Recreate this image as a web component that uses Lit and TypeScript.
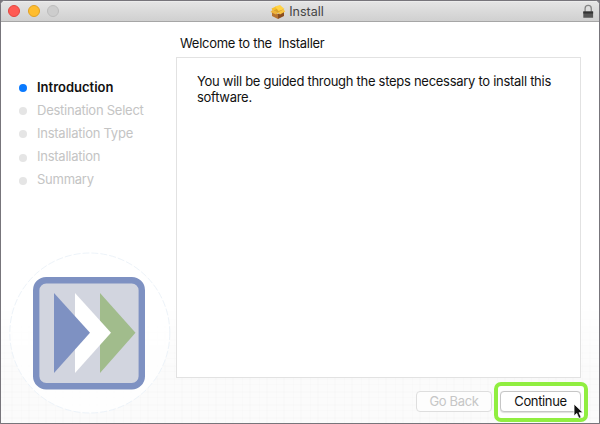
import { LitElement, html, css } from "lit";
import { customElement, state } from "lit/decorators.js";
import { classMap } from "lit/directives/class-map.js";

@customElement("app-root")
export class AppRoot extends LitElement {
  @state() private steps = ["Introduction", "Destination Select", "Installation Type", "Installation", "Summary"];
  @state() private current = 0;

  static styles = css`
    :host { display: block; width: 600px; height: 424px; background: #77757b; font: 13px/16px Inter, "Liberation Sans", sans-serif; letter-spacing: -.285px; color: #111; }
    * { box-sizing: border-box; }
    .window { height: 424px; border: 1px solid #77757b; border-radius: 5px 5px 0 0; overflow: hidden; display: flex; flex-direction: column; background: #fff; position: relative; }
    .bar { height: 21px; flex: none; display: grid; grid-template-columns: 1fr auto 1fr; align-items: center; background: linear-gradient(#f4f4f4 0, #e4e4e4 1px, #d0d0d0 20px); border-bottom: 1px solid #a6a6a6; }
    .lights { display: flex; gap: 7.5px; padding-left: 7px; }
    .light { width: 12px; height: 12px; border-radius: 50%; border: 1px solid #e2463f; background: #ff5b54; }
    .light.min { border-color: #e0a023; background: #ffbd2e; }
    .light.off { border-color: #bcbcbc; background: #cdcdcd; }
    .title { display: flex; align-items: center; gap: 3px; font-size: 12.5px; letter-spacing: 0; color: #444; padding: 2px 6px 0 0; }
    .title svg { margin-top: -1px; }
    .lock { justify-self: end; margin-right: 5px; display: block; }
    .body { flex: 1; display: grid; grid-template-columns: 175px 405px 1fr; position: relative; }
    .texture { position: absolute; inset: 280px 0 0 0; pointer-events: none;
      background: repeating-linear-gradient(90deg, transparent 0 3px, rgba(0,0,0,.007) 3px 4px, transparent 4px 10px, rgba(0,0,0,.006) 10px 12px, transparent 12px 17px),
        repeating-linear-gradient(transparent 0 4px, rgba(0,0,0,.008) 4px 5px, transparent 5px 11px, rgba(0,0,0,.006) 11px 13px), rgba(0,0,0,.014);
      -webkit-mask-image: linear-gradient(transparent, #000 70px); mask-image: linear-gradient(transparent, #000 70px); }
    .side { display: flex; flex-direction: column; position: relative; }
    .steps { list-style: none; margin: 0; padding: 53px 0 0 18px; height: 229px; }
    .step { display: flex; align-items: center; gap: 10px; height: 23.2px; color: #c4c4c4; white-space: nowrap; letter-spacing: -.25px; }
    .dot { width: 8px; height: 8px; border-radius: 50%; background: #e5e5e5; margin-top: 3px; }
    .current { color: #111; font-weight: 600; letter-spacing: 0; }
    .current .dot { background: #0a7aff; }
    .logo { margin-left: 7px; display: block; }
    .main { display: flex; flex-direction: column; position: relative; }
    h1 { font: inherit; margin: 13px 0 6px 4px; height: 16px; white-space: pre; }
    .panel { height: 321px; border: 1px solid #e2e2e2; background: #fff; padding: 15px 20px; white-space: nowrap; }
    .panel p { margin: 0; }
    .actions { display: flex; margin: 4px -8px 0 240px; align-items: center; }
    .btn { font: inherit; letter-spacing: -.35px; height: 21px; border: 1px solid #c6c6c6; border-radius: 4px; background: #fff; padding: 0; display: block; color: #111; box-shadow: 0 .5px 1px rgba(0,0,0,.13); margin-bottom: 2px; }
    .back { width: 76px; color: #c6c6c6; border-color: #dedede; background: #fdfdfd; box-shadow: none; }
    .ring { margin-left: 2px; width: 94px; height: 40px; border: 4px solid #90ee40; border-radius: 7px; display: flex; align-items: center; padding-left: 2px; background: #fff; flex: none; }
    .next { width: 81px; }
    .pointer { position: absolute; left: 572px; top: 402px; }
  `;

  render() {
    return html`
      <div class="window">
        <header class="bar">
          <div class="lights"><span class="light"></span><span class="light min"></span><span class="light off"></span></div>
          <div class="title">
            <svg width="16" height="16" viewBox="0 0 16 16">
              <path d="M2 7l6 3v5l-6-3z" fill="#b8742e"/><path d="M14 7l-6 3v5l6-3z" fill="#8b4e20"/>
              <path d="M2 5.5l6-3 6 3-6 4z" fill="#dba32c"/>
              <path d="M1.5 4.5L6 2.5l2 1.7-5 2.5z" fill="#f7c02c"/><path d="M5 2.5l5-1.5 4.5 4-6 2z" fill="#ffd345"/>
              <path d="M.5 8l2-2L8 8.5l-2 2z" fill="#eeb43c"/><path d="M15.3 7.6L13.5 5.6 8 8.5l2 2z" fill="#f9c544"/>
            </svg><span>Install</span>
          </div>
          <svg class="lock" width="11" height="15" viewBox="0 0 11 15">
            <path d="M2.1 8V4.4a3.1 3.1 0 0 1 6.2 0V8" fill="none" stroke="#858585" stroke-width="1.3"/>
            <path d="M.3 7.5h9.8v6.3H.3z" fill="#555"/><path d="M.3 7.5h9.8v2H.3z" fill="#333"/>
          </svg>
        </header>
        <div class="body">
          <div class="texture"></div>
          <aside class="side">
            <ul class="steps">
              ${this.steps.map((s, i) => html`<li class=${classMap({ step: true, current: i === this.current })}><span class="dot"></span><span class="label">${s}</span></li>`)}
            </ul>
            <svg class="logo" width="164" height="164" viewBox="8 251 164 164">
              <circle cx="89.8" cy="333" r="80" fill="#fff" fill-opacity=".75" stroke="#edf3f9" stroke-width="1" stroke-dasharray="7 2"/>
              <rect x="36.2" y="280.2" width="105.6" height="106" rx="10" fill="#d2d5df" stroke="#7e91c2" stroke-width="6.4"/>
              <path d="M100 293l35.5 39.8L100 373z" fill="#a1bc8c"/>
              <path d="M75 293l36 39.8L75 373z" fill="#fff"/>
              <path d="M54 293l36 39.8L54 373z" fill="#7e91c2"/>
            </svg>
          </aside>
          <main class="main">
            <h1>Welcome to the  Installer</h1>
            <section class="panel"><p>You will be guided through the steps necessary to install this<br>software.</p></section>
            <div class="actions">
              <button class="btn back" disabled>Go Back</button>
              <div class="ring"><button class="btn next">Continue</button></div>
            </div>
          </main>
        </div>
        <svg class="pointer" width="11" height="17" viewBox="0 0 11 17"><path d="M1 1v12l2.8-2.6 2.1 5 2.3-1-2.1-4.7h4z" fill="#111" stroke="#fff" stroke-width=".8"/></svg>
      </div>`;
  }
}
